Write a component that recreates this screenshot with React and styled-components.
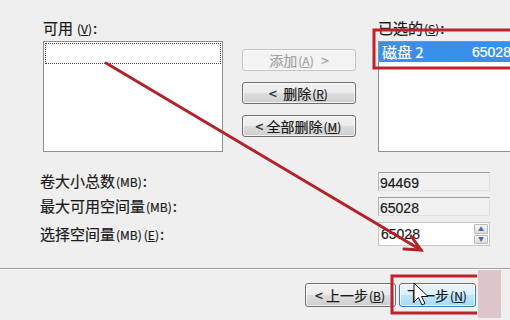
import styled, { createGlobalStyle } from "styled-components"

const Global = createGlobalStyle`
  html, body {
    margin: 0;
    padding: 0;
    background: #efefef;
  }
  body {
    font-family: "Noto Sans CJK SC", "Liberation Sans", sans-serif;
  }
`;

const Page = styled.div`
  position: relative;
  width: 510px;
  height: 320px;
  overflow: hidden;
  background: #efefef;
  color: #1a1a1a;
  font-size: 15px;
  -webkit-text-stroke: 0.2px currentColor;
`;

const Top = styled.div`
  display: flex;
  padding: 20px 0 0 43px;
`;

const Column = styled.div`
  width: ${p => p.$w}px;
  margin-left: ${p => p.$ml || 0}px;
  flex-shrink: 0;
`;

const Label = styled.div`
  height: 16px;
  line-height: 16px;
  margin-bottom: 5px;
  white-space: nowrap;
`;

const Key = styled.span`
  font-size: 12px;
  padding: 0 1px;
  margin-left: ${p => p.$gap ? 3 : 0}px;
  u { text-underline-offset: 1px; }
`;

const ListBox = styled.div`
  box-sizing: border-box;
  height: 111px;
  border: 1px solid #8c8f96;
  background: #fff;
  padding: 1px;
`;

const FocusRow = styled.div`
  height: 19px;
  border: 1px dotted #4a4a4a;
`;

const SelRow = styled.div`
  display: grid;
  grid-template-columns: 90px auto;
  height: 20px;
  line-height: 20px;
  margin: -1px;
  padding-left: 3px;
  background: #3990ea;
  color: #fff;
  font-size: 15px;
  white-space: nowrap;
`;

const Num = styled.span`
  font-family: "Liberation Sans", sans-serif;
  font-size: 14px;
`;

const ButtonCol = styled.div`
  display: flex;
  flex-direction: column;
  gap: 11px;
  width: 114px;
  margin-left: 19px;
  padding-top: 29px;
  flex-shrink: 0;
`;

const Button = styled.div`
  box-sizing: border-box;
  height: ${p => p.$h || 22}px;
  width: ${p => p.$w ? p.$w + "px" : "auto"};
  display: flex;
  align-items: center;
  justify-content: center;
  border: 1px solid ${p => p.$disabled ? "#c4c4c4" : p.$hot ? "#3c7fb1" : "#707070"};
  border-radius: 3px;
  background: ${p => p.$disabled
    ? "#f4f4f4"
    : p.$hot
      ? "linear-gradient(#eaf6fd 0%, #d9f0fc 50%, #bee6fd 51%, #a7d9f5 100%)"
      : "linear-gradient(#f2f2f2 0%, #ebebeb 50%, #dddddd 51%, #cfcfcf 100%)"};
  color: ${p => p.$disabled ? "#a2a2a2" : "#1a1a1a"};
  font-size: 14px;
  white-space: nowrap;
  box-shadow: inset 0 0 0 1px rgba(255, 255, 255, 0.7);
`;

const Stats = styled.div`
  display: grid;
  grid-template-columns: 338px 112px;
  grid-template-rows: 19px 19px 24px;
  row-gap: 6px;
  align-items: center;
  padding-left: 40px;
  margin-top: 20px;
`;

const StatLabel = styled.div`
  white-space: nowrap;
  line-height: 16px;
`;

const Field = styled.div`
  box-sizing: border-box;
  height: 19px;
  line-height: 17px;
  padding-left: 1px;
  border-top: 1px solid #9b9b9b;
  border-left: 1px solid #b4b4b4;
  border-right: 1px solid #e2e2e2;
  border-bottom: 1px solid #e2e2e2;
  background: #f0f0f0;
`;

const Spin = styled.div`
  box-sizing: border-box;
  height: 24px;
  display: flex;
  align-items: center;
  justify-content: space-between;
  padding: 1px 1px 1px 2px;
  border: 1px solid #c8c8c8;
  background: #fff;
`;

const SpinBtns = styled.div`
  display: flex;
  flex-direction: column;
  gap: 1px;
  align-self: stretch;
`;

const SpinBtn = styled.div`
  flex: 1;
  width: 12px;
  display: flex;
  align-items: center;
  justify-content: center;
  border: 1px solid #b9b9b9;
  border-radius: 1px;
  background: linear-gradient(#f6f6f6, #dcdcdc);
  font-size: 6px;
  color: #4a6a9a;
  line-height: 1;
  -webkit-text-stroke: 0;
`;

const Separator = styled.div`
  margin-top: 22px;
  height: 1px;
  background: #a0a0a0;
  border-bottom: 1px solid #fafafa;
`;

const Footer = styled.div`
  display: flex;
  align-items: flex-start;
  gap: 3px;
  padding-left: 305px;
`;

const FooterBtn = styled(Button)`
  margin-top: 13px;
`;

const Smudge = styled.div`
  width: 23px;
  height: 48px;
  margin-left: -1px;
  background: #dcc6ca;
`;

const Overlay = styled.svg`
  position: absolute;
  left: 0;
  top: 0;
  pointer-events: none;
`;

export default function App() {
  return (
    <Page>
      <Global />
      <Top>
        <Column $w={180}>
          <Label>可用<Key $gap>(<u>V</u>)</Key>:</Label>
          <ListBox>
            <FocusRow />
          </ListBox>
        </Column>

        <ButtonCol>
          <Button $disabled>添加<Key>(<u>A</u>)</Key>&nbsp;&nbsp;&gt;</Button>
          <Button>&lt;&nbsp;&nbsp;删除<Key>(<u>R</u>)</Key></Button>
          <Button>&lt;&nbsp;全部删除<Key>(<u>M</u>)</Key></Button>
        </ButtonCol>

        <Column $w={150} $ml={22}>
          <Label>已选的<Key>(<u>S</u>)</Key>:</Label>
          <ListBox>
            <SelRow>
              <span>磁盘 2</span>
              <Num>65028</Num>
            </SelRow>
          </ListBox>
        </Column>
      </Top>

      <Stats>
        <StatLabel>卷大小总数<Key>(MB)</Key>:</StatLabel>
        <Field><Num>94469</Num></Field>
        <StatLabel>最大可用空间量<Key>(MB)</Key>:</StatLabel>
        <Field><Num>65028</Num></Field>
        <StatLabel>选择空间量<Key>(MB)</Key><Key>(<u>E</u>)</Key>:</StatLabel>
        <Spin>
          <Num>65028</Num>
          <SpinBtns>
            <SpinBtn>▲</SpinBtn>
            <SpinBtn>▼</SpinBtn>
          </SpinBtns>
        </Spin>
      </Stats>

      <Separator />

      <Footer>
        <FooterBtn $w={91} $h={24}>&lt;&nbsp;上一步<Key>(<u>B</u>)</Key></FooterBtn>
        <FooterBtn $w={77} $h={24} $hot>下一步<Key>(<u>N</u>)</Key></FooterBtn>
        <Smudge />
      </Footer>

      <Overlay width="510" height="320" viewBox="0 0 510 320">
        <g stroke="#c0222b" strokeWidth="3" fill="none">
          <polyline points="520,30 374,30 374,68 520,68" />
          <polyline points="477,276 392,276 392,313 477,313" />
        </g>
        <g stroke="#b32229" strokeWidth="3" fill="none" strokeLinecap="round">
          <line x1="106" y1="63" x2="421" y2="250" />
          <polyline points="411,236 421,250 404,249" />
        </g>
        <path
          d="M414 283 L414 302 L418.5 297.5 L422 305 L425 303.5 L421.5 296.5 L428 296.5 Z"
          fill="#fff"
          stroke="#111"
          strokeWidth="1"
          strokeLinejoin="round"
        />
      </Overlay>
    </Page>
  );
}
